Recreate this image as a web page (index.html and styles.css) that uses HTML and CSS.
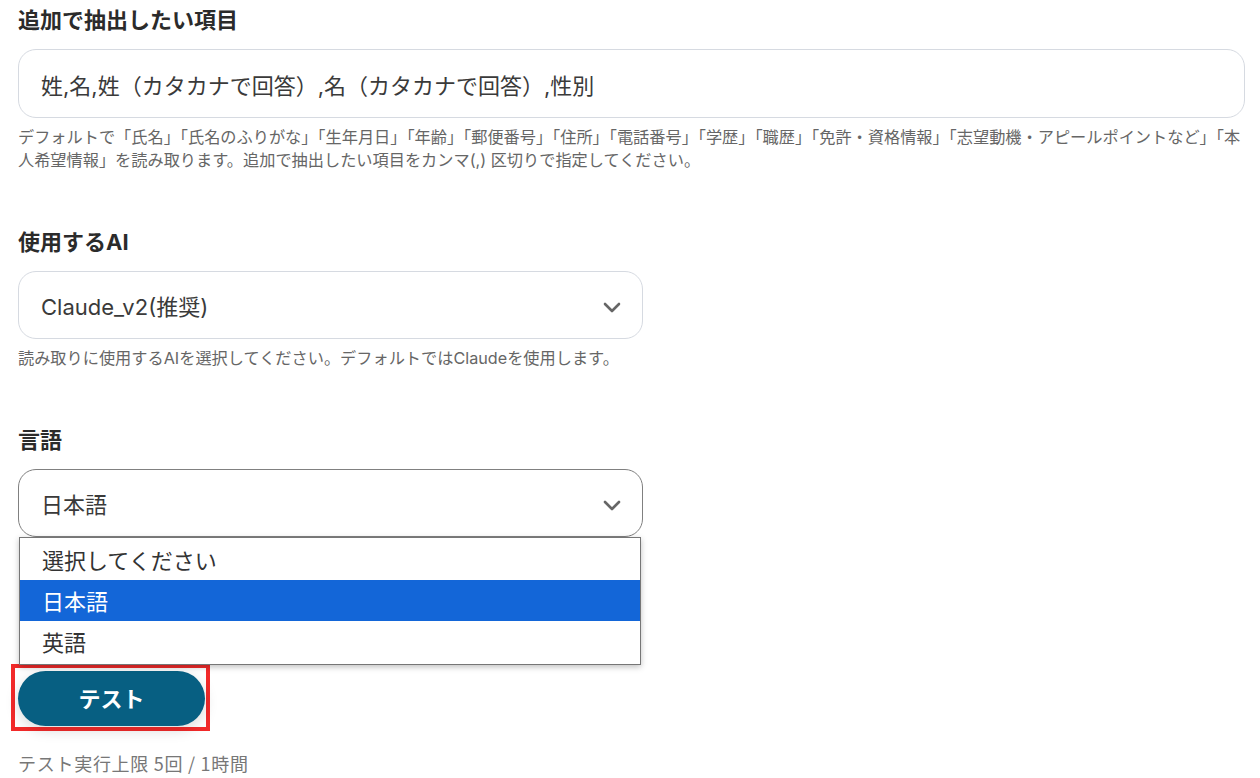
FILE: index.html
```html
<!DOCTYPE html>
<html lang="ja">
<head>
    <meta charset="UTF-8">
    <meta name="viewport" content="width=device-width, initial-scale=1.0">
    <title>テスト設定</title>
    <link rel="stylesheet" href="styles.css">
</head>
<body>

<main class="form">
    <section class="field">
        <h2 class="field-label">追加で抽出したい項目</h2>
        <div class="text-input">姓,名,姓（カタカナで回答）,名（カタカナで回答）,性別</div>
        <p class="field-help help-wide">デフォルトで「氏名」「氏名のふりがな」「生年月日」「年齢」「郵便番号」「住所」「電話番号」「学歴」「職歴」「免許・資格情報」「志望動機・アピールポイントなど」「本人希望情報」を読み取ります。追加で抽出したい項目をカンマ(,) 区切りで指定してください。</p>
    </section>

    <section class="field">
        <h2 class="field-label">使用するAI</h2>
        <div class="select">
            <span>Claude_v2(推奨)</span>
            <svg class="chevron" width="18" height="11" viewBox="0 0 18 11"><path d="M2 2 L9 9 L16 2" fill="none" stroke="#666" stroke-width="2.6" stroke-linecap="round" stroke-linejoin="round"/></svg>
        </div>
        <p class="field-help">読み取りに使用するAIを選択してください。デフォルトではClaudeを使用します。</p>
    </section>

    <section class="field field-last">
        <h2 class="field-label">言語</h2>
        <div class="select-wrap">
            <div class="select select-open">
                <span>日本語</span>
                <svg class="chevron" width="18" height="11" viewBox="0 0 18 11"><path d="M2 2 L9 9 L16 2" fill="none" stroke="#666" stroke-width="2.6" stroke-linecap="round" stroke-linejoin="round"/></svg>
            </div>
            <ul class="select-menu">
                <li>選択してください</li>
                <li class="selected">日本語</li>
                <li>英語</li>
            </ul>
        </div>
    </section>

    <div class="actions">
        <span class="highlight"><button class="btn-test">テスト</button></span>
        <p class="test-limit">テスト実行上限 5回 / 1時間</p>
    </div>
</main>

</body>
</html>
```

FILE: styles.css
```css
body {
    margin: 0;
    background-color: #fff;
    color: #333;
    font-family: Inter, 'Noto Sans CJK JP', sans-serif;
}
.form {
    padding: 5px 15px 0 18px;
}
.field {
    margin-bottom: 55px;
}
.field-last {
    margin-bottom: 0;
}
.field-label {
    margin: 0 0 14px;
    font-size: 22px;
    line-height: 30px;
    font-weight: 700;
    color: #2b2b2b;
}
.text-input {
    height: 67px;
    display: flex;
    align-items: center;
    padding: 0 22px;
    border: 1px solid #d6dae1;
    border-radius: 18px;
    font-size: 22px;
    color: #3a3a3a;
}
.field-help {
    margin: 8px 0 0;
    font-size: 16.2px;
    line-height: 23px;
    color: #666;
}
.help-wide {
    margin-right: -8px;
}
.select-wrap {
    position: relative;
    width: 624px;
}
.select {
    height: 66px;
    width: 580px;
    display: flex;
    align-items: center;
    justify-content: space-between;
    padding: 0 21px 0 22px;
    border: 1px solid #d6dae1;
    border-radius: 18px;
    font-size: 22px;
    color: #3a3a3a;
}
.select-open {
    border-color: #808080;
}
.chevron {
    margin-top: 4px;
}
.select-menu {
    position: absolute;
    top: 100%;
    left: 1px;
    right: 1px;
    margin: 0;
    padding: 1px 0 2px;
    list-style: none;
    background: #fff;
    border: 1px solid #767676;
    box-shadow: 0 2px 6px rgba(0,0,0,0.25);
    font-family: 'Noto Sans CJK JP', sans-serif;
    font-size: 22px;
    color: #333;
}
.select-menu li {
    height: 41px;
    line-height: 41px;
    padding-left: 22px;
}
.select-menu li.selected {
    background-color: #1366d8;
    color: #fff;
}
.actions {
    margin-top: 127px;
}
.highlight {
    display: inline-block;
    margin-left: -7px;
    padding: 3px 1px 1px 3px;
    border: 4px solid #f22a2a;
}
.btn-test {
    display: block;
    width: 187px;
    height: 55px;
    padding: 0 0 3px;
    border: none;
    border-radius: 28px;
    background-color: #075f82;
    color: #fff;
    font-family: 'Noto Sans CJK JP', sans-serif;
    font-size: 22px;
    line-height: 1;
    font-weight: 700;
    box-shadow: 0 4px 14px rgba(0,0,0,0.15);
}
.test-limit {
    margin: 21px 0 0;
    font-family: 'Noto Sans CJK JP', sans-serif;
    font-size: 18px;
    line-height: 23px;
    letter-spacing: 0.04em;
    color: #777;
}
```
